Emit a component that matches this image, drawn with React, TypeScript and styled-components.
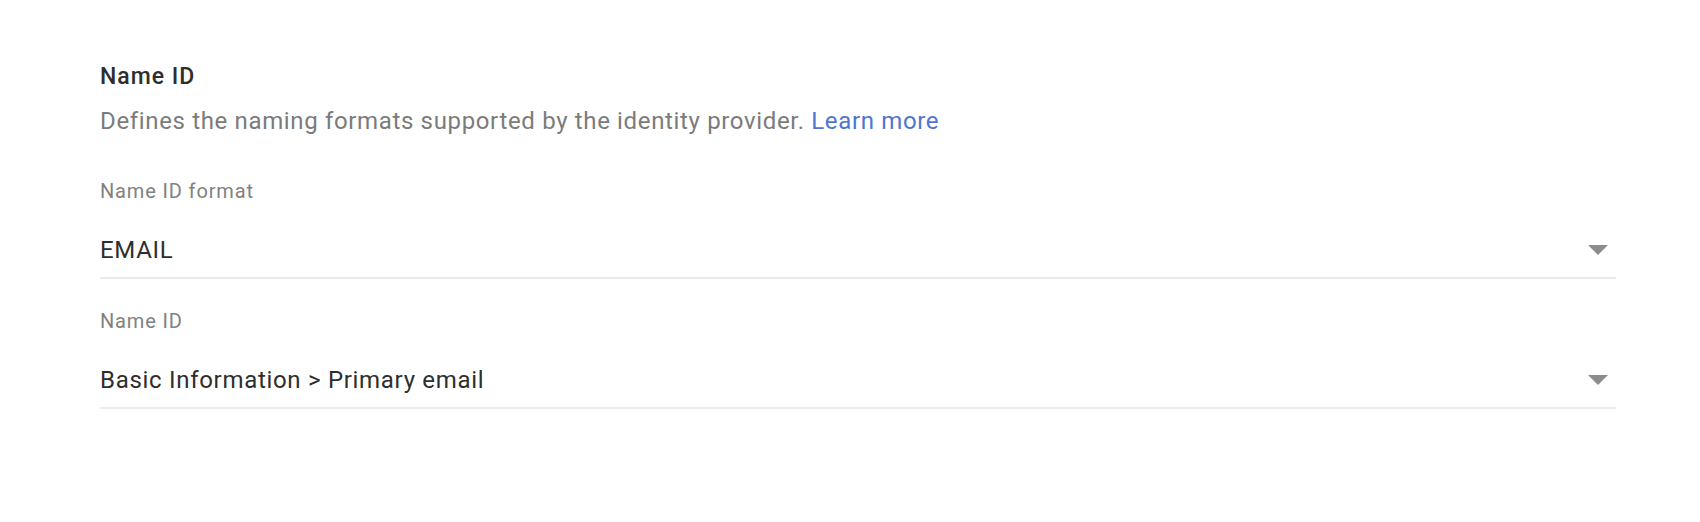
import React from "react";
import styled, { createGlobalStyle } from "styled-components";

const Global = createGlobalStyle`
  html, body { margin: 0; padding: 0; background: #ffffff; }
  body { font-family: Roboto, "Noto Sans", Arial, sans-serif; }
`;

const Page = styled.div`
  width: 1700px;
  height: 522px;
  box-sizing: border-box;
  padding: 63px 84px 0 100px;
  display: flex;
  flex-direction: column;
`;

const Title = styled.h2`
  margin: 0;
  font-size: 23px;
  line-height: 28px;
  font-weight: 500;
  letter-spacing: 1px;
  color: #2e2e2e;
`;

const Description = styled.p`
  margin: 14px 0 0;
  font-size: 24px;
  line-height: 32px;
  letter-spacing: 0.65px;
  color: #7b7b7b;
`;

const Link = styled.a`
  color: #4f74d2;
  text-decoration: none;
`;

const Fields = styled.div`
  margin-top: 42px;
  display: flex;
  flex-direction: column;
  gap: 30px;
`;

const Field = styled.div`
  display: flex;
  flex-direction: column;
`;

const Label = styled.label`
  font-size: 20px;
  line-height: 24px;
  letter-spacing: 0.85px;
  color: #818181;
`;

const SelectRow = styled.div`
  display: flex;
  align-items: center;
  justify-content: space-between;
  padding: 32px 8px 12px 0;
  border-bottom: 2px solid #ebebeb;
`;

const Value = styled.span`
  font-size: 24px;
  line-height: 30px;
  letter-spacing: 0.7px;
  color: #2e2e2e;
`;

const Arrow = styled.svg`
  width: 20px;
  height: 10px;
  fill: #8c8c8c;
`;

const SelectField = ({ label, value }: { label: string; value: string }) => (
  <Field>
    <Label>{label}</Label>
    <SelectRow>
      <Value>{value}</Value>
      <Arrow viewBox="0 0 20 10">
        <path d="M0 0 L20 0 L10 10 Z" />
      </Arrow>
    </SelectRow>
  </Field>
);

export default function App() {
  return (
    <>
      <Global />
      <Page>
        <Title>Name ID</Title>
        <Description>
          Defines the naming formats supported by the identity provider.{" "}
          <Link href="#">Learn more</Link>
        </Description>
        <Fields>
          <SelectField label="Name ID format" value="EMAIL" />
          <SelectField label="Name ID" value="Basic Information > Primary email" />
        </Fields>
      </Page>
    </>
  );
}
